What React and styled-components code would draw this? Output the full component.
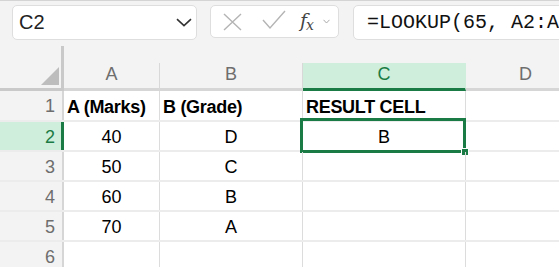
import React from 'react'
import styled, { createGlobalStyle } from 'styled-components'

const GREEN = '#1b7b44'

const GlobalStyle = createGlobalStyle`
  body {
    margin: 0;
    background: #fff;
    font-family: "Liberation Sans", Arial, sans-serif;
    overflow: hidden;
  }
`

const columns = [
  { id: 'A', width: 96 },
  { id: 'B', width: 143 },
  { id: 'C', width: 163, selected: true },
  { id: 'D', width: 120 }
]

const rows = [
  { n: 1, height: 31, cells: [{ text: 'A (Marks)', bold: true }, { text: 'B (Grade)', bold: true }, { text: 'RESULT CELL', bold: true }, {}] },
  { n: 2, height: 30, selected: true, cells: [{ text: '40', center: true }, { text: 'D', center: true }, { text: 'B', center: true, active: true }, {}] },
  { n: 3, height: 30, cells: [{ text: '50', center: true }, { text: 'C', center: true }, {}, {}] },
  { n: 4, height: 30, cells: [{ text: '60', center: true }, { text: 'B', center: true }, {}, {}] },
  { n: 5, height: 30, cells: [{ text: '70', center: true }, { text: 'A', center: true }, {}, {}] },
  { n: 6, height: 30, cells: [{}, {}, {}, {}] }
]

const App = () => (
  <>
    <GlobalStyle />
    <Toolbar>
      <NameBox>
        <span>C2</span>
        <svg width='16' height='9' viewBox='0 0 16 9'>
          <path d='M1 1.2 L8 7.6 L15 1.2' fill='none' stroke='#333' strokeWidth='1.6' />
        </svg>
      </NameBox>
      <FxGroup>
        <svg width='20' height='18' viewBox='0 0 20 18'>
          <path d='M2 1 L19 17 M19 1 L2 17' fill='none' stroke='#b4b4b4' strokeWidth='1.4' />
        </svg>
        <svg width='24' height='20' viewBox='0 0 24 20'>
          <path d='M1 10 L8 18 L23 1' fill='none' stroke='#b4b4b4' strokeWidth='1.4' />
        </svg>
        <FxLabel>
          <i>f</i><sub>x</sub>
        </FxLabel>
        <svg width='7' height='5' viewBox='0 0 7 5'>
          <path d='M0.5 0.8 L3.5 4 L6.5 0.8' fill='none' stroke='#aaa' strokeWidth='1' />
        </svg>
      </FxGroup>
      <FormulaInput>=LOOKUP(65, A2:A5, B2:B5)</FormulaInput>
    </Toolbar>

    <HeaderRow>
      <Corner>
        <Triangle />
      </Corner>
      {columns.map((c) => (
        <ColHead key={c.id} width={c.width} selected={c.selected}>{c.id}</ColHead>
      ))}
    </HeaderRow>

    {rows.map((r) => (
      <Row key={r.n} height={r.height}>
        <RowHead selected={r.selected}>{r.n}</RowHead>
        {r.cells.map((cell, i) => (
          <Cell key={i} width={columns[i].width} bold={cell.bold} center={cell.center}>
            {cell.text}
            {cell.active && (
              <Selection>
                <FillHandle />
              </Selection>
            )}
          </Cell>
        ))}
      </Row>
    ))}
  </>
)

const Toolbar = styled.div`
  display: flex;
  align-items: flex-start;
  gap: 13px;
  height: 46px;
  padding: 4px 0 0 12px;
  box-sizing: border-box;
  background: #f3f3f3;
  border-top: 1px solid #d4d4d4;
  overflow: hidden;
`

const Box = styled.div`
  flex: none;
  display: flex;
  align-items: center;
  box-sizing: border-box;
  background: #fff;
  border: 1px solid #dedede;
  border-radius: 5px;
`

const NameBox = styled(Box)`
  width: 185px;
  height: 35px;
  padding: 0 4px 0 6px;
  justify-content: space-between;
  font-size: 20px;
  color: #222;
`

const FxGroup = styled(Box)`
  width: 129px;
  height: 33px;
  padding: 0 0 0 11px;

  & > svg:nth-child(1) { margin-right: 20px; }
  & > svg:nth-child(2) { margin-right: 14px; margin-top: -3px; }
`

const FxLabel = styled.span`
  font-family: "DejaVu Serif", "Liberation Serif", serif;
  color: #444;
  font-size: 19px;
  margin-right: 9px;
  margin-top: -2px;

  & i { font-style: italic; }
  & sub {
    font-size: 14px;
    font-style: italic;
    vertical-align: -3px;
    margin-left: -1px;
  }
`

const FormulaInput = styled(Box)`
  width: 320px;
  height: 35px;
  padding-left: 13px;
  margin-left: 1px;
  white-space: nowrap;
  overflow: hidden;
  font-family: "Liberation Mono", "Courier New", monospace;
  font-size: 20px;
  color: #111;
`

const HeaderRow = styled.div`
  display: flex;
  align-items: flex-end;
  height: 45px;
  background: #f3f3f3;
`

const Corner = styled.div`
  flex: none;
  width: 64px;
  height: 45px;
  box-sizing: border-box;
  border-right: 3px solid #c9c9c9;
  border-bottom: 3px solid #c9c9c9;
  display: flex;
  align-items: flex-end;
  justify-content: flex-end;
  padding: 0 2px 3px 0;
`

const Triangle = styled.div`
  width: 0;
  height: 0;
  border-left: 18px solid transparent;
  border-bottom: 18px solid #bdbdbd;
`

const ColHead = styled.div`
  flex: none;
  width: ${(p) => p.width}px;
  height: 28px;
  box-sizing: border-box;
  display: flex;
  align-items: center;
  justify-content: center;
  padding-bottom: 2px;
  font-size: 18px;
  color: ${(p) => (p.selected ? GREEN : '#6e6e6e')};
  background: ${(p) => (p.selected ? '#cfeedb' : '#f3f3f3')};
  border-right: 1px solid ${(p) => (p.selected ? '#cfeedb' : '#d8d8d8')};
  border-bottom: 3px solid ${(p) => (p.selected ? GREEN : '#d6d6d6')};
`

const Row = styled.div`
  display: flex;
  height: ${(p) => p.height}px;
  box-sizing: border-box;
  border-bottom: 2px solid #ececec;
`

const RowHead = styled.div`
  flex: none;
  width: 64px;
  box-sizing: border-box;
  display: flex;
  align-items: center;
  justify-content: flex-end;
  padding: 2px ${(p) => (p.selected ? 6 : 7)}px 0 0;
  font-size: 18px;
  color: ${(p) => (p.selected ? GREEN : '#6e6e6e')};
  background: ${(p) => (p.selected ? '#cfeedb' : '#f3f3f3')};
  border-right: ${(p) => (p.selected ? `3px solid ${GREEN}` : '2px solid #d6d6d6')};
`

const Cell = styled.div`
  flex: none;
  position: relative;
  width: ${(p) => p.width}px;
  box-sizing: border-box;
  display: flex;
  align-items: center;
  justify-content: ${(p) => (p.center ? 'center' : 'flex-start')};
  padding: 3px 3px 0;
  font-size: 18px;
  font-weight: ${(p) => (p.bold ? 700 : 400)};
  letter-spacing: ${(p) => (p.bold ? '-0.3px' : '0')};
  color: #000;
  border-right: 1px solid #dcdcdc;
  white-space: nowrap;
`

const Selection = styled.div`
  position: absolute;
  top: -4px;
  left: -3px;
  right: -1px;
  bottom: -3px;
  border: 3px solid ${GREEN};
  pointer-events: none;
`

const FillHandle = styled.div`
  position: absolute;
  right: -6px;
  bottom: -6px;
  width: 6px;
  height: 6px;
  background: ${GREEN};
  border: 1px solid #fff;
`

export default App
